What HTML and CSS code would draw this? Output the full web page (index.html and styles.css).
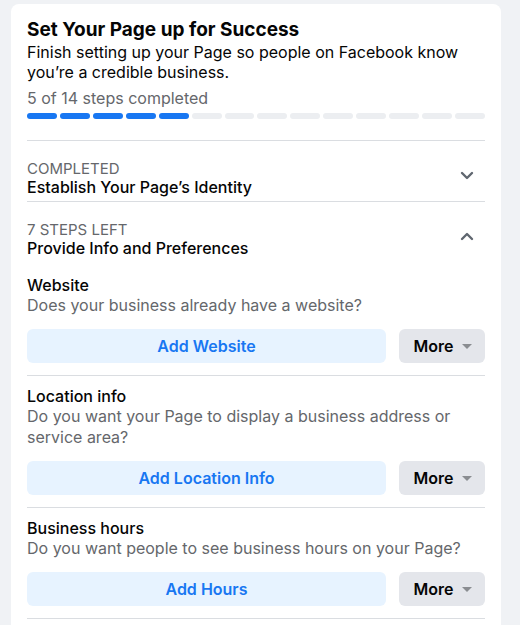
FILE: index.html
```html
<!DOCTYPE html>
<html lang="en">
<head>
  <meta charset="UTF-8">
  <meta name="viewport" content="width=device-width, initial-scale=1.0">
  <title>Set Your Page up for Success</title>
  <link rel="stylesheet" href="styles.css">
</head>
<body>

<div class="card">
  <h1 class="title">Set Your Page up for Success</h1>
  <p class="subtitle">Finish setting up your Page so people on Facebook know you’re a credible business.</p>
  <p class="progress-label">5 of 14 steps completed</p>
  <div class="progress">
    <span class="seg done"></span>
    <span class="seg done"></span>
    <span class="seg done"></span>
    <span class="seg done"></span>
    <span class="seg done"></span>
    <span class="seg"></span>
    <span class="seg"></span>
    <span class="seg"></span>
    <span class="seg"></span>
    <span class="seg"></span>
    <span class="seg"></span>
    <span class="seg"></span>
    <span class="seg"></span>
    <span class="seg"></span>
  </div>

  <div class="group-header">
    <div class="group-text">
      <div class="group-status">COMPLETED</div>
      <div class="group-name">Establish Your Page’s Identity</div>
    </div>
    <span class="chevron">
      <svg width="14" height="9" viewBox="0 0 14 9"><path d="M2 2l5 5 5-5" fill="none" stroke="#606770" stroke-width="2.4" stroke-linecap="round" stroke-linejoin="round"/></svg>
    </span>
  </div>

  <div class="group-header open">
    <div class="group-text">
      <div class="group-status">7 STEPS LEFT</div>
      <div class="group-name">Provide Info and Preferences</div>
    </div>
    <span class="chevron">
      <svg width="14" height="9" viewBox="0 0 14 9"><path d="M2 7l5-5 5 5" fill="none" stroke="#606770" stroke-width="2.4" stroke-linecap="round" stroke-linejoin="round"/></svg>
    </span>
  </div>

  <div class="steps">
    <div class="step">
      <div class="step-title">Website</div>
      <div class="step-desc">Does your business already have a website?</div>
      <div class="step-actions">
        <button class="btn-primary">Add Website</button>
        <button class="btn-more">More <span class="caret"></span></button>
      </div>
    </div>

    <div class="step">
      <div class="step-title">Location info</div>
      <div class="step-desc">Do you want your Page to display a business address or service area?</div>
      <div class="step-actions">
        <button class="btn-primary">Add Location Info</button>
        <button class="btn-more">More <span class="caret"></span></button>
      </div>
    </div>

    <div class="step">
      <div class="step-title">Business hours</div>
      <div class="step-desc">Do you want people to see business hours on your Page?</div>
      <div class="step-actions">
        <button class="btn-primary">Add Hours</button>
        <button class="btn-more">More <span class="caret"></span></button>
      </div>
    </div>
  </div>
</div>

</body>
</html>
```

FILE: styles.css
```css
body {
  font-family: Inter, "Liberation Sans", Arial, sans-serif;
  background-color: #f0f2f5;
  color: #050505;
  margin: 0;
  padding: 4px 0 0 11px;
}
.card {
  width: 490px;
  box-sizing: border-box;
  background-color: #fff;
  border-radius: 8px;
  padding: 14px 16px 40px;
}
.title {
  margin: 0;
  font-size: 19px;
  line-height: 24px;
  font-weight: 700;
}
.subtitle {
  margin: 0;
  font-size: 16px;
  line-height: 20px;
}
.progress-label {
  margin: 6px 0 0;
  font-size: 16px;
  line-height: 20px;
  color: #65676b;
}
.progress {
  display: flex;
  gap: 3px;
  margin-top: 5px;
  margin-bottom: 21px;
}
.seg {
  flex: 1;
  height: 6px;
  border-radius: 3px;
  background-color: #eceef1;
}
.seg.done {
  background-color: #1877f2;
}
.group-header {
  display: flex;
  align-items: center;
  border-top: 1px solid #dadde1;
  padding: 18px 0 4px;
}
.group-text {
  flex: 1;
}
.group-status {
  font-size: 15px;
  line-height: 19px;
  color: #65676b;
}
.group-name {
  font-size: 16px;
  line-height: 19px;
  font-weight: 500;
}
.chevron {
  width: 36px;
  height: 36px;
  display: flex;
  align-items: center;
  justify-content: center;
  margin-top: -6px;
}
.steps {
  padding-top: 3px;
}
.step {
  padding: 10px 0 12px;
  border-bottom: 1px solid #dadde1;
}
.step-title {
  font-size: 16px;
  line-height: 20px;
  font-weight: 500;
}
.step-desc {
  font-size: 16px;
  line-height: 21px;
  color: #65676b;
}
.step-actions {
  display: flex;
  gap: 13px;
  margin-top: 13px;
}
button {
  height: 34px;
  border: none;
  border-radius: 6px;
  font-family: inherit;
  font-size: 16px;
  font-weight: 600;
  cursor: pointer;
}
.btn-primary {
  flex: 1;
  background-color: #e7f3ff;
  color: #1877f2;
}
.btn-more {
  width: 86px;
  display: flex;
  align-items: center;
  justify-content: center;
  gap: 9px;
  background-color: #e4e6eb;
  color: #050505;
  padding: 0 0 0 2px;
}
.caret {
  width: 0;
  height: 0;
  border-left: 5px solid transparent;
  border-right: 5px solid transparent;
  border-top: 5px solid #8a8d91;
}
```
